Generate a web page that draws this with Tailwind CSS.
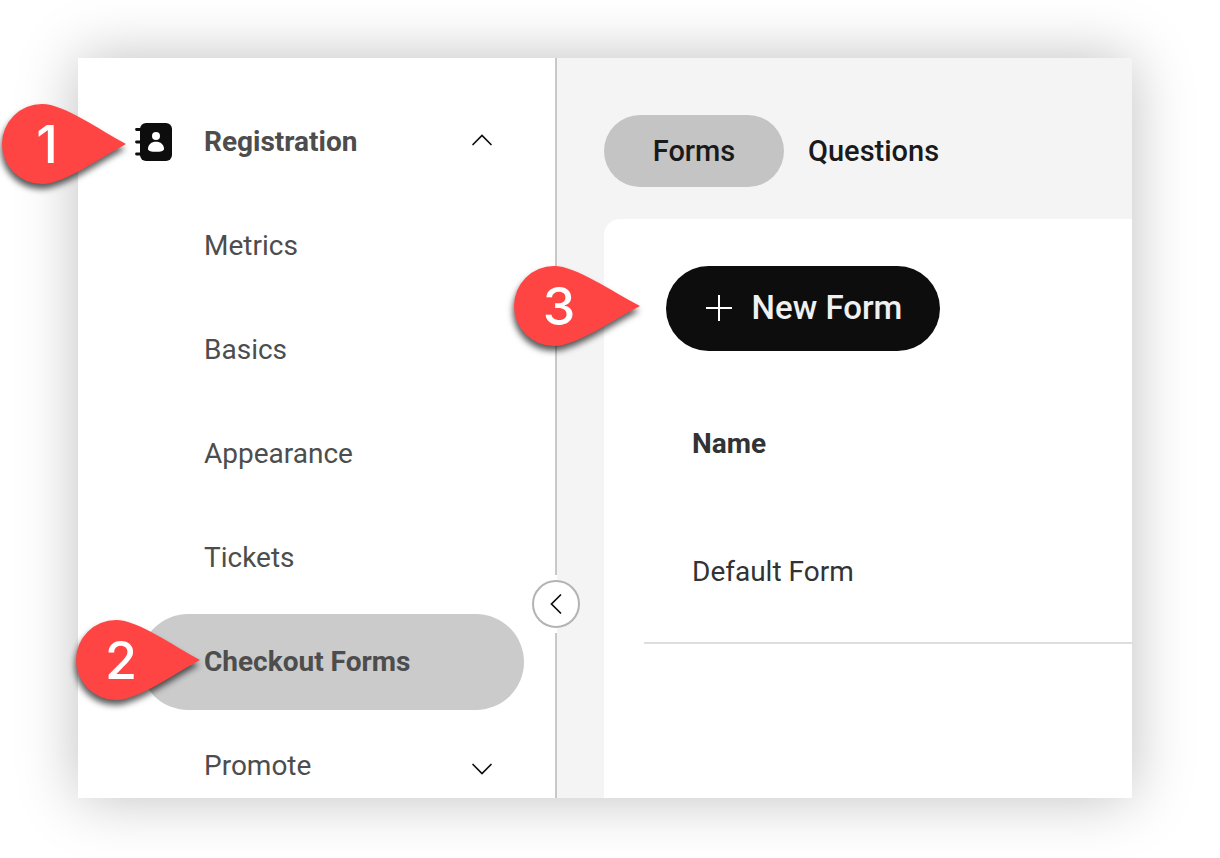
<!DOCTYPE html>
<html lang="en">
  <head>
    <meta charset="UTF-8" />
    <meta name="viewport" content="width=device-width, initial-scale=1.0" />
    <script src="https://cdn.jsdelivr.net/npm/@tailwindcss/browser@4"></script>
    <title>Checkout Forms</title>
  </head>
  <body class="bg-white font-[Roboto,sans-serif]">
    <div class="pt-[58px] pb-[60px] pl-[78px] pr-[88px]">
      <div class="flex bg-white shadow-[0_0_56px_rgba(0,0,0,0.25)]">
        <!-- sidebar -->
        <aside class="relative w-[479px] shrink-0 border-r-2 border-[#c8c8c8] pt-9 text-[28px] leading-8 text-[#4d4d4d]">
          <nav class="flex flex-col gap-2">
            <button type="button" class="relative flex items-center py-8 pl-14 pr-[62px] text-left font-bold">
              <svg class="-my-1 mr-8 h-10 w-[38px]" viewBox="0 0 38 40" fill="none">
                <rect x="6" y="1" width="32" height="38" rx="6" fill="#0d0d0d" />
                <path d="M2.500 7.500H8M2.500 20H8M2.500 32H8" stroke="#0d0d0d" stroke-width="2.800" stroke-linecap="round" />
                <circle cx="22" cy="14" r="4" fill="#fff" />
                <path d="M14 27C14 22.500 17.500 19.800 22 19.800S30 22.500 30 27C30 29.200 26.500 29.800 22 29.800S14 29.200 14 27Z" fill="#fff" />
              </svg>
              <span class="grow">Registration</span>
              <svg class="mb-1 h-3 w-[22px]" viewBox="0 0 22 12" fill="none" stroke="#0d0d0d" stroke-width="1.7" stroke-linecap="round"><path d="M2 10.500L11 1.500L20 10.500" /></svg>
              <span class="absolute left-[-76px] top-[10px] h-20 w-[124px] font-[Inter,sans-serif] text-[52px] font-medium text-white">
                <svg class="absolute inset-0 overflow-visible drop-shadow-[-1px_5px_3px_rgba(0,0,0,0.65)]" width="124" height="80" viewBox="0 0 124 80"><path d="M40 0C62 0 96 25 124 40C96 55 62 80 40 80A40 40 0 0 1 40 0Z" fill="#ff4444" /></svg>
                <span class="absolute inset-y-0 left-0 flex w-[90px] items-center justify-center pt-[2px]">1</span>
              </span>
            </button>
            <a href="#" class="py-8 pl-[126px]">Metrics</a>
            <a href="#" class="py-8 pl-[126px]">Basics</a>
            <a href="#" class="py-8 pl-[126px]">Appearance</a>
            <a href="#" class="py-8 pl-[126px]">Tickets</a>
            <a href="#" class="relative ml-[62px] mr-[31px] rounded-full bg-[#cbcbcb] py-8 pl-16 font-bold">
              Checkout Forms
              <span class="absolute left-[-64px] top-[6px] h-20 w-[124px] font-[Inter,sans-serif] text-[52px] font-medium text-white">
                <svg class="absolute inset-0 overflow-visible drop-shadow-[-1px_5px_3px_rgba(0,0,0,0.65)]" width="124" height="80" viewBox="0 0 124 80"><path d="M40 0C62 0 96 25 124 40C96 55 62 80 40 80A40 40 0 0 1 40 0Z" fill="#ff4444" /></svg>
                <span class="absolute inset-y-0 left-0 flex w-[90px] items-center justify-center pt-[2px]">2</span>
              </span>
            </a>
            <button type="button" class="flex items-center pt-8 pb-4 pl-[126px] pr-[62px] text-left">
              <span class="grow">Promote</span>
              <svg class="mt-1.5 h-3 w-[22px]" viewBox="0 0 22 12" fill="none" stroke="#0d0d0d" stroke-width="1.7" stroke-linecap="round"><path d="M2 1.500L11 10.500L20 1.500" /></svg>
            </button>
          </nav>
          <!-- collapse handle, breaks the divider -->
          <div class="absolute -right-[25px] bottom-[165px] flex h-[58px] w-12 items-center justify-center">
            <span class="absolute inset-y-0 left-[23px] w-[2px] bg-white"></span>
            <button type="button" aria-label="Collapse" class="relative flex size-12 items-center justify-center rounded-full border-2 border-[#b3b3b3] bg-white">
              <svg class="h-[22px] w-3" viewBox="0 0 12 22" fill="none" stroke="#0d0d0d" stroke-width="1.7" stroke-linecap="round"><path d="M10.500 2L1.500 11L10.500 20" /></svg>
            </button>
          </div>
        </aside>

        <!-- content -->
        <main class="flex min-w-0 grow flex-col bg-[#f4f4f4] pl-[47px] pt-[57px]">
          <div class="flex items-center gap-6 text-[29px] font-medium text-[#1a1a1a]">
            <button type="button" class="h-[72px] w-[180px] rounded-full bg-[#c4c4c4] pt-[2px]">Forms</button>
            <button type="button" class="pt-[2px]">Questions</button>
          </div>
          <section class="mt-8 grow rounded-tl-2xl bg-white pl-10 pt-[47px]">
            <div class="relative ml-[22px] w-[274px]">
              <button type="button" class="flex h-[85px] w-full items-center justify-center gap-5 rounded-full bg-[#0d0d0d] pb-[2px] pl-[2px] text-[33px] font-medium text-[#f0f0f0]">
                <svg class="size-[26px]" viewBox="0 0 26 26" stroke="#fff" stroke-width="2"><path d="M13 0V26M0 13H26" /></svg>
                New Form
              </button>
              <span class="absolute left-[-152px] top-0 h-20 w-[126px] font-[Inter,sans-serif] text-[52px] font-medium text-white">
                <svg class="absolute inset-0 overflow-visible drop-shadow-[-1px_5px_3px_rgba(0,0,0,0.65)]" width="126" height="80" viewBox="0 0 126 80"><path d="M40 0C62 0 97 25 126 40C97 55 62 80 40 80A40 40 0 0 1 40 0Z" fill="#ff4444" /></svg>
                <span class="absolute inset-y-0 left-0 flex w-[90px] items-center justify-center pt-[2px]">3</span>
              </span>
            </div>
            <table class="mt-7 w-full text-left text-[28px] leading-8 text-[#333]">
              <thead>
                <tr><th class="h-32 pl-12 pt-[2px] font-bold">Name</th></tr>
              </thead>
              <tbody>
                <tr class="border-b-2 border-[#dedede]"><td class="h-[136px] pl-12 pb-1.5">Default Form</td></tr>
              </tbody>
            </table>
          </section>
        </main>
      </div>
    </div>
  </body>
</html>
